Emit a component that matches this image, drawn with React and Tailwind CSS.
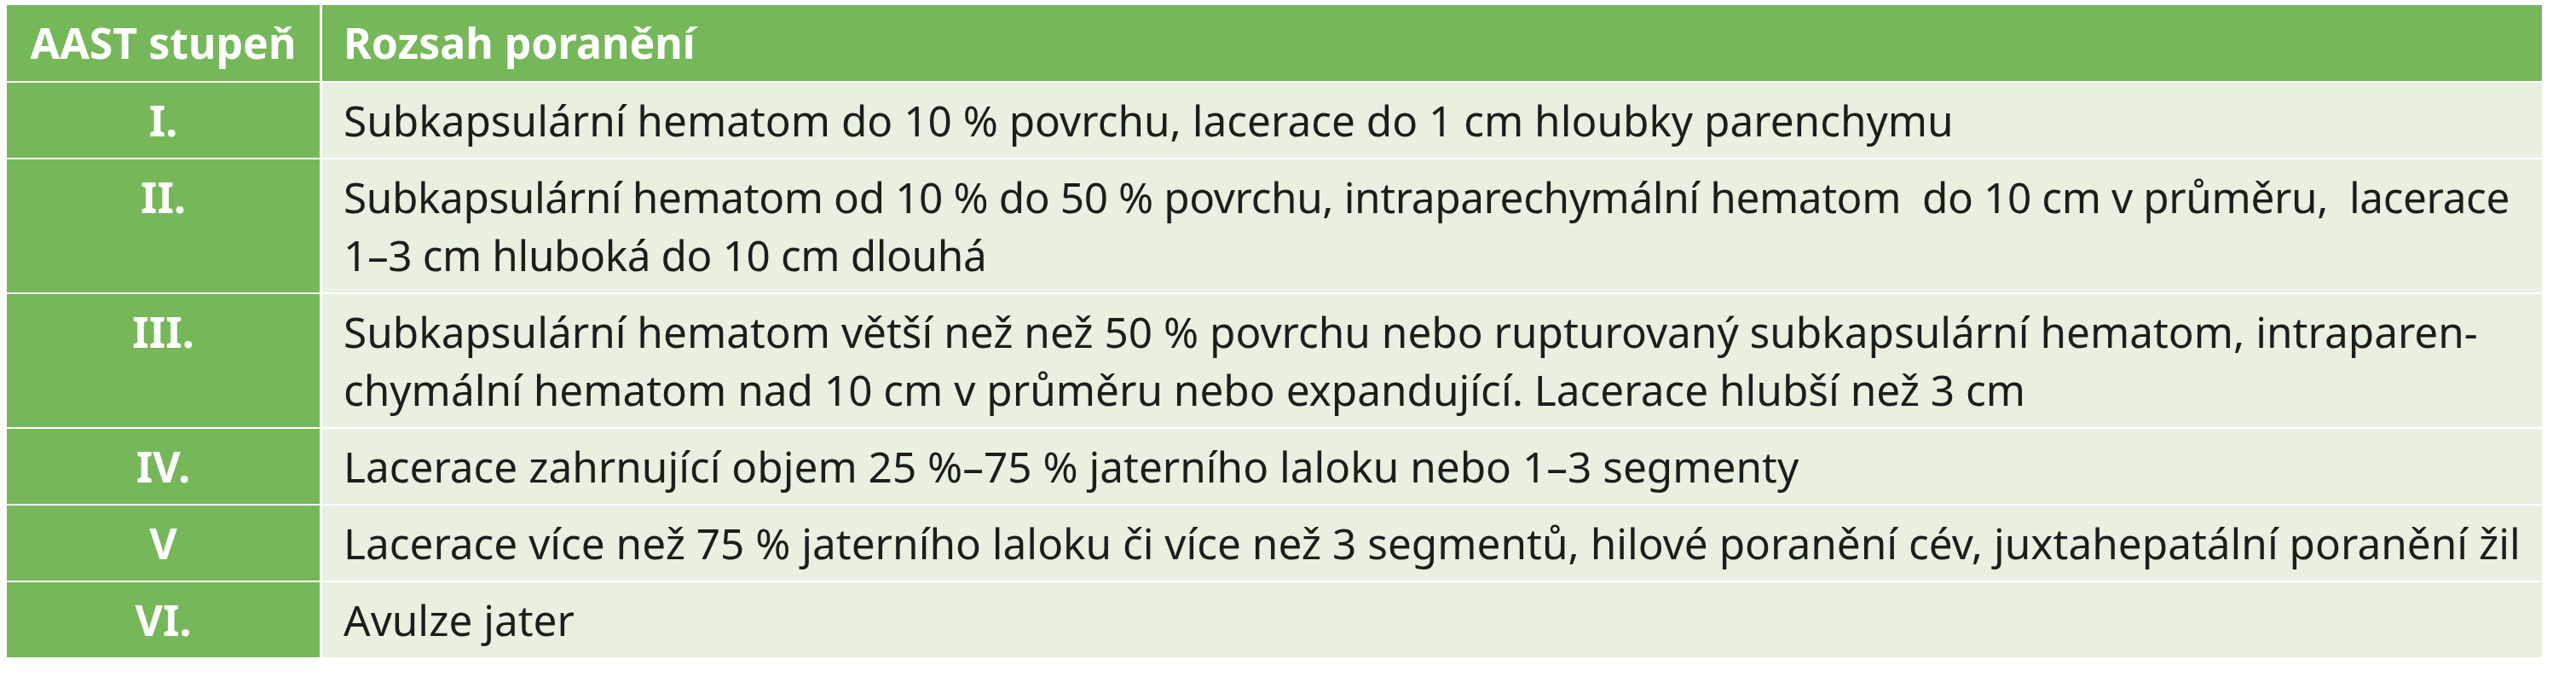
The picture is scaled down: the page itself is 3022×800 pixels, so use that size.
const rows = [
  { grade: 'I.', lines: ['Subkapsulární hematom do 10 % povrchu, lacerace do 1 cm hloubky parenchymu'] },
  {
    grade: 'II.',
    lines: [
      'Subkapsulární hematom od 10 % do 50 % povrchu, intraparechymální hematom  do 10 cm v průměru,  lacerace',
      '1–3 cm hluboká do 10 cm dlouhá',
    ],
    tight: true,
  },
  {
    grade: 'III.',
    lines: [
      'Subkapsulární hematom větší než než 50 % povrchu nebo rupturovaný subkapsulární hematom, intraparen-',
      'chymální hematom nad 10 cm v průměru nebo expandující. Lacerace hlubší než 3 cm',
    ],
  },
  { grade: 'IV.', lines: ['Lacerace zahrnující objem 25 %–75 % jaterního laloku nebo 1–3 segmenty'] },
  { grade: 'V', lines: ['Lacerace více než 75 % jaterního laloku či více než 3 segmentů, hilové poranění cév, juxtahepatální poranění žil'] },
  { grade: 'VI.', lines: ['Avulze jater'] },
]

export default function App() {
  return (
    <div className="w-[3022px] h-[800px] bg-white pt-[6px] pl-[8px] font-['Noto_Sans',sans-serif]">
      <div className="w-[2974px] grid grid-cols-[367px_1fr] gap-x-[3px] gap-y-[2px] bg-white">
        <div className="bg-[#76b75a] text-white font-bold text-[50px] leading-[69px] py-[10px] text-center">AAST stupeň</div>
        <div className="bg-[#76b75a] text-white font-bold text-[50px] leading-[69px] py-[10px] pl-[25px]">Rozsah poranění</div>
        {rows.map(r => (
          <div key={r.grade} className="contents">
            <div className="bg-[#76b75a] text-white font-bold text-[50px] leading-[68px] py-[10px] text-center">{r.grade}</div>
            <div className={`bg-[#e8f0e0] text-[#1d1d1b] text-[49.5px] leading-[68px] py-[10px] pl-[25px] ${r.tight ? 'tracking-[-0.4px]' : ''}`}>
              {r.lines.map((l, i) => (
                <div key={i} className="whitespace-pre">{l}</div>
              ))}
            </div>
          </div>
        ))}
      </div>
    </div>
  )
}
